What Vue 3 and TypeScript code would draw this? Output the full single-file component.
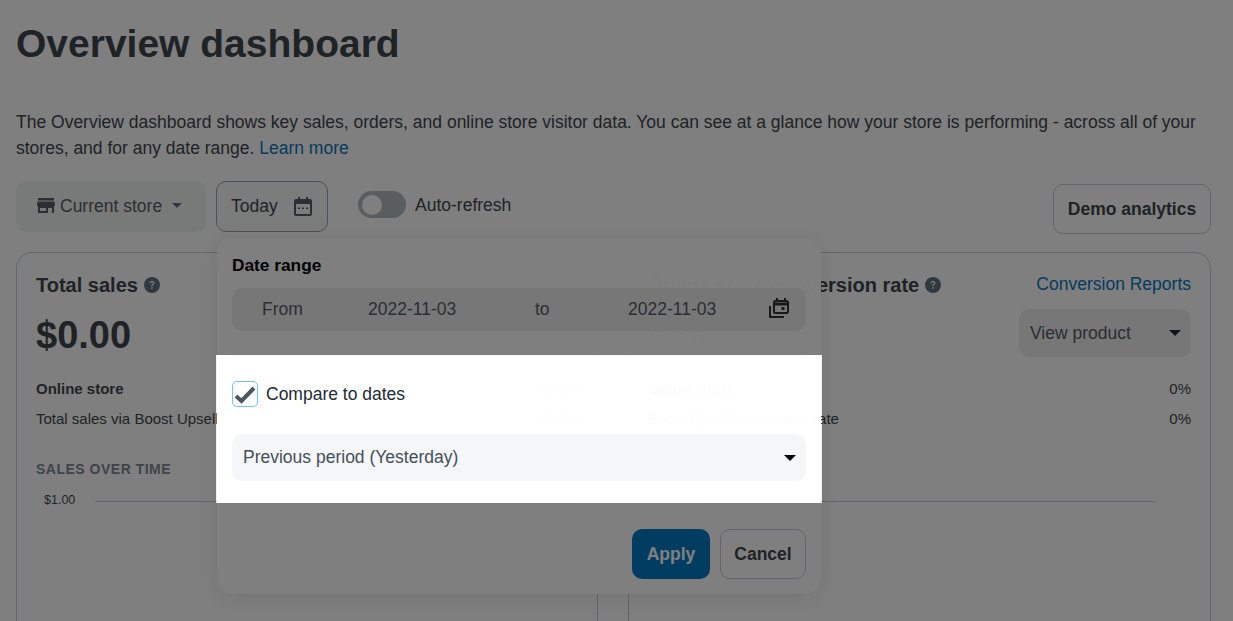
<script setup lang="ts">
interface Row { label: string; value: string; bold?: boolean }
const salesRows: Row[] = [
  { label: 'Online store', value: '$0.00', bold: true },
  { label: 'Total sales via Boost Upsell', value: '$0.00' },
]
const rateRows: Row[] = [
  { label: 'Online store', value: '0%', bold: true },
  { label: 'Boost Upsell conversion rate', value: '0%' },
]
</script>

<template>
  <div class="page">
    <h1 class="title">Overview dashboard</h1>
    <p class="intro">
      The Overview dashboard shows key sales, orders, and online store visitor data. You can see at a glance how your store is performing - across all of your stores, and for any date range.
      <a class="link">Learn more</a>
    </p>

    <div class="toolbar">
      <button class="btn store">
        <svg class="store-ico" viewBox="0 0 18 15"><path d="M1 0h16v2.500H1zM.5 3.500h17L18 8h-1v7h-2v-5h-4v5H1V8H0zM3 10v3h6v-3z" fill-rule="evenodd" /></svg>
        <span>Current store</span>
        <i class="caret small"></i>
      </button>
      <button class="btn today">
        <span>Today</span>
        <svg class="cal-ico" viewBox="0 0 18 19">
          <path d="M4 0h2v2h6V0h2v2h2a2 2 0 0 1 2 2v13a2 2 0 0 1-2 2H2a2 2 0 0 1-2-2V4a2 2 0 0 1 2-2h2zM2 7v10h14V7z" fill-rule="evenodd" />
          <path d="M4 10.500h2V12H4zM8 10.500h2V12H8zM12 10.500h2V12h-2z" />
        </svg>
      </button>
      <div class="toggle"><span class="knob"></span></div>
      <span class="toggle-label">Auto-refresh</span>
      <button class="btn demo">Demo analytics</button>
    </div>

    <div class="cards">
      <section class="card">
        <div class="card-head">
          <h2>Total sales</h2>
          <svg class="help" viewBox="0 0 16 16"><circle cx="8" cy="8" r="8" /><path d="M5.600 6.200C5.700 4.900 6.700 4.100 8 4.100c1.400 0 2.400.8 2.400 2 0 1-.6 1.500-1.300 2-.5.300-.6.500-.6 1.100H7.300c0-1 .3-1.400 1-1.900.5-.3.800-.6.800-1.100S8.700 5.300 8 5.300s-1.100.4-1.200 1zM7.200 10.300h1.400v1.500H7.200z" fill="#fff" /></svg>
        </div>
        <div class="big">$0.00</div>
        <div v-for="r in salesRows" :key="r.label" class="row" :class="{ bold: r.bold }">
          <span>{{ r.label }}</span><span class="val">{{ r.value }}</span>
        </div>
        <h3 class="over-time">SALES OVER TIME</h3>
        <div class="chart"><span class="tick">$1.00</span><span class="grid-line"></span></div>
      </section>

      <section class="card">
        <div class="card-head">
          <h2>Online store conversion rate</h2>
          <svg class="help" viewBox="0 0 16 16"><circle cx="8" cy="8" r="8" /><path d="M5.600 6.200C5.700 4.900 6.700 4.100 8 4.100c1.400 0 2.400.8 2.400 2 0 1-.6 1.500-1.300 2-.5.300-.6.500-.6 1.100H7.300c0-1 .3-1.400 1-1.900.5-.3.800-.6.800-1.100S8.700 5.300 8 5.300s-1.100.4-1.200 1zM7.200 10.300h1.400v1.500H7.200z" fill="#fff" /></svg>
          <a class="link reports">Conversion Reports</a>
        </div>
        <div class="rate-line">
          <div class="big">0 %</div>
          <div class="view-select"><span>View product</span><i class="caret"></i></div>
        </div>
        <div v-for="r in rateRows" :key="r.label" class="row" :class="{ bold: r.bold }">
          <span>{{ r.label }}</span><span class="val plain">{{ r.value }}</span>
        </div>
        <div class="chart rate"><span class="tick">1</span><span class="grid-line"></span></div>
      </section>
    </div>

    <div class="popover">
      <div class="pop-title">Date range</div>
      <div class="range">
        <span>From</span>
        <span>2022-11-03</span>
        <span>to</span>
        <span>2022-11-03</span>
        <svg class="multi-cal" viewBox="0 0 20 20" fill="none" stroke="currentColor" stroke-width="2">
          <path d="M5 4.500A1.500 1.500 0 0 1 6.500 3h11A1.500 1.500 0 0 1 19 4.500v9a1.500 1.500 0 0 1-1.500 1.500h-11A1.500 1.500 0 0 1 5 13.500z" />
          <path d="M5 5.500h14v1H5zM8 0v3M16 0v3" />
          <path d="M1 8v11h14" />
          <rect x="12.500" y="9" width="3" height="3" fill="currentColor" stroke="none" />
        </svg>
      </div>
      <hr class="rule" />
      <label class="compare">
        <span class="check">
          <svg viewBox="0 0 24 24"><path d="M3 14l5.500 5L21 6" fill="none" stroke="#4d5560" stroke-width="4" /></svg>
        </span>
        <span>Compare to dates</span>
      </label>
      <div class="period"><span>Previous period (Yesterday)</span><i class="caret black"></i></div>
      <div class="actions">
        <button class="apply">Apply</button>
        <button class="cancel">Cancel</button>
      </div>
    </div>

    <div class="spotlight"></div>
  </div>
</template>

<style>
html, body { margin: 0; background: #fff; }
</style>

<style scoped>
.page {
  position: relative;
  box-sizing: border-box;
  width: 1233px;
  height: 621px;
  overflow: hidden;
  padding: 16px 22px 0 16px;
  font-family: "Liberation Sans", Arial, sans-serif;
  color: #40464d;
  background: #fff;
}
button { font-family: inherit; cursor: pointer; }
.title { margin: 0; font-size: 39px; line-height: 56px; font-weight: 700; height: 56px; }
.intro { margin: 37px 0 0; font-size: 17.500px; line-height: 26px; height: 52px; }
.link { color: #0a76bd; text-decoration: none; }

.toolbar { display: flex; align-items: flex-start; margin-top: 20px; height: 71px; }
.btn {
  box-sizing: border-box;
  display: flex;
  align-items: center;
  font-size: 17.500px;
  color: #565d64;
  border-radius: 10px;
  background: #f4f6f8;
  border: 0;
  padding: 0;
}
.store { width: 190px; height: 51px; padding-left: 21px; background: #f0f4f3; }
.store-ico { width: 18px; height: 15px; fill: #565d64; margin: -3px 5px 0 0; }
.caret { display: block; width: 0; height: 0; border-left: 6px solid transparent; border-right: 6px solid transparent; border-top: 6px solid #212b36; }
.caret.small { border-width: 5px 5px 0; border-top-color: #637381; margin: -3px 0 0 10px; }
.caret.black { border-top-color: #000; }
.today {
  width: 112px; height: 51px; margin-left: 10px; padding-left: 14px;
  background: #f7f8f8; color: #40464d;
  border: 1px solid #9aa3aa; box-shadow: 0 0 2px rgba(255,255,255,.5);
}
.cal-ico { width: 18px; height: 19px; margin-left: 16px; fill: #565d64; }
.toggle { width: 48px; height: 27px; border-radius: 14px; background: #b5bbc0; margin: 10px 0 0 30px; display: flex; align-items: center; padding-left: 4px; box-sizing: border-box; }
.knob { width: 20px; height: 20px; border-radius: 50%; background: #fff; }
.toggle-label { font-size: 17.500px; margin: 14px 0 0 9px; line-height: 20px; }
.demo {
  margin: 3px 0 0 auto; width: 158px; height: 50px; justify-content: center;
  background: #fff; border: 1px solid #c4cdd5; font-weight: 700; color: #40464d;
}

.cards { display: grid; grid-template-columns: 582px 583px; gap: 30px; }
.card { box-sizing: border-box; height: 420px; border: 1px solid #c4cdd5; border-radius: 16px; padding: 20px 19px; background: #fff; }
.card-head { display: flex; align-items: center; height: 24px; }
.card-head h2 { margin: 0; font-size: 20px; font-weight: 700; line-height: 24px; }
.help { width: 16px; height: 16px; fill: #637381; margin-left: 6px; }
.reports { margin-left: auto; font-size: 17.500px; margin-top: -2px; }
.big { font-size: 38px; font-weight: 700; line-height: 44px; margin-top: 16px; }
.rate-line { display: flex; justify-content: space-between; align-items: flex-start; }
.rate-line .big { font-size: 33px; margin-top: 14px; }
.view-select {
  display: flex; align-items: center; justify-content: space-between; box-sizing: border-box;
  width: 172px; height: 48px; margin-top: 12px; padding: 0 10px 0 11px;
  background: #eeeff0; border-radius: 10px; font-size: 17.500px; color: #565d64;
}
.row { display: flex; justify-content: space-between; font-size: 15px; line-height: 30px; }
.big + .row { margin-top: 17px; }
.rate-line + .row { margin-top: 17px; }
.row.bold { font-weight: 700; }
.val { color: #919eab; font-weight: 400; }
.val.plain { color: #40464d; }
.over-time { margin: 25px 0 0; font-size: 14px; line-height: 20px; font-weight: 700; color: #7c8894; letter-spacing: .5px; }
.chart { display: flex; align-items: center; margin-top: 11px; height: 20px; font-size: 12.500px; }
.tick { width: 59px; padding-left: 8px; box-sizing: border-box; }
.grid-line { flex: 1; height: 1px; background: #c4cdd5; margin-top: 2px; }
.chart.rate { margin-top: 56px; }
.chart.rate .grid-line { margin-right: 36px; }

.popover {
  position: absolute; left: 217px; top: 238px; box-sizing: border-box;
  width: 604px; height: 356px; padding: 17px 15px 15px;
  border-radius: 16px;
  background: rgba(255, 255, 255, .98);
  box-shadow: 0 4px 24px rgba(0, 0, 0, .1);
}
.pop-title { font-size: 17.300px; line-height: 20px; font-weight: 700; color: #000; }
.range {
  display: grid; grid-template-columns: 106px 167px 93px 141px 1fr; align-items: center;
  height: 43px; margin-top: 13px; border-radius: 10px; background: #eeeff0;
  font-size: 17.500px; color: #565d64; box-sizing: border-box; padding-left: 30px;
}
.multi-cal { width: 20px; height: 20px; color: #333; margin-top: -4px; }
.rule { border: 0; height: 1px; background: #f4f6f8; margin: 24px 0 0; }
.compare { display: flex; align-items: center; gap: 8px; margin-top: 25px; font-size: 17.500px; color: #212b36; }
.check {
  box-sizing: border-box; width: 26px; height: 26px; border: 1px solid #6cc8ff; border-radius: 5px;
  background: #fff; display: flex;
}
.check svg { width: 24px; height: 24px; }
.period {
  display: flex; align-items: center; justify-content: space-between; box-sizing: border-box;
  height: 47px; margin-top: 27px; padding: 0 10px 0 11px; border-radius: 10px; background: #f4f6f8;
  font-size: 17.500px; color: #454f5b;
}
.actions { display: flex; justify-content: flex-end; gap: 10px; margin-top: 48px; }
.actions button { box-sizing: border-box; height: 50px; border-radius: 10px; font-size: 17.500px; font-weight: 700; }
.apply { width: 78px; border: 0; background: #007ac2; color: #fff; }
.cancel { width: 86px; border: 1px solid #c4cdd5; background: #fff; color: #40464d; }

.spotlight {
  position: absolute; left: 216px; top: 355px; width: 606px; height: 148px;
  box-shadow: 0 0 0 2000px rgba(0, 0, 0, .5);
  pointer-events: none;
}
</style>
